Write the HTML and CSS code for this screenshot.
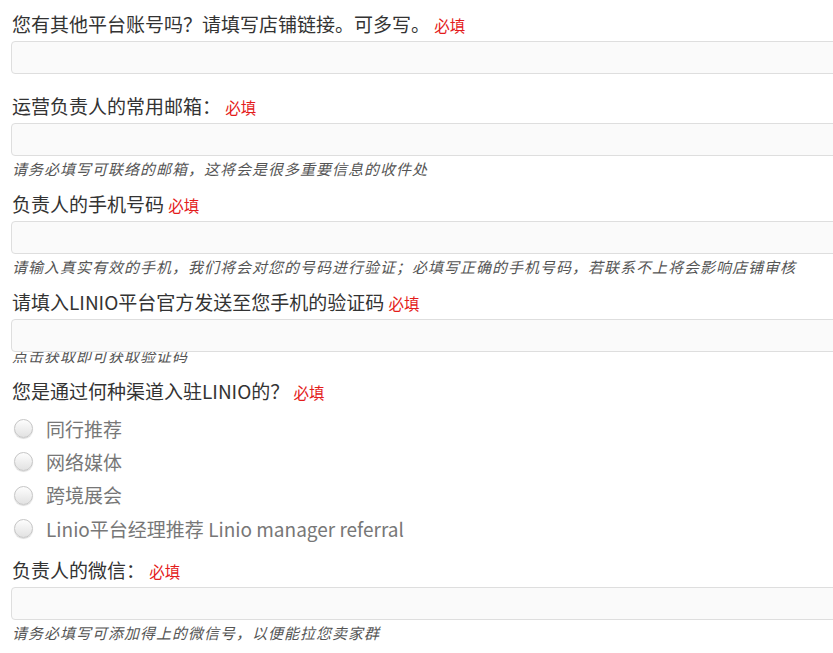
FILE: index.html
```html
<!DOCTYPE html>
<html lang="zh">
<head>
<meta charset="utf-8">
<title>入驻表单</title>
<link rel="stylesheet" href="styles.css">
</head>
<body>
<form class="form">
  <div class="group">
    <div class="label">您有其他平台账号吗？请填写店铺链接。可多写。 <span class="req">必填</span></div>
    <input class="input" type="text">
  </div>
  <div class="group has-help">
    <div class="label">运营负责人的常用邮箱： <span class="req">必填</span></div>
    <input class="input" type="text">
    <div class="help">请务必填写可联络的邮箱，这将会是很多重要信息的收件处</div>
  </div>
  <div class="group has-help">
    <div class="label">负责人的手机号码 <span class="req">必填</span></div>
    <input class="input" type="text">
    <div class="help">请输入真实有效的手机，我们将会对您的号码进行验证；必填写正确的手机号码，若联系不上将会影响店铺审核</div>
  </div>
  <div class="group has-help">
    <div class="label">请填入LINIO平台官方发送至您手机的验证码 <span class="req">必填</span></div>
    <input class="input" type="text">
    <div class="help tucked">点击获取即可获取验证码</div>
  </div>
  <div class="group radio-group">
    <div class="label">您是通过何种渠道入驻LINIO的？ <span class="req">必填</span></div>
    <div class="radios">
      <label class="radio"><span class="dot"></span><span class="radio-text">同行推荐</span></label>
      <label class="radio"><span class="dot"></span><span class="radio-text">网络媒体</span></label>
      <label class="radio"><span class="dot"></span><span class="radio-text">跨境展会</span></label>
      <label class="radio"><span class="dot"></span><span class="radio-text">Linio平台经理推荐 Linio manager referral</span></label>
    </div>
  </div>
  <div class="group has-help">
    <div class="label">负责人的微信： <span class="req">必填</span></div>
    <input class="input" type="text">
    <div class="help">请务必填写可添加得上的微信号，以便能拉您卖家群</div>
  </div>
</form>
</body>
</html>
```

FILE: styles.css
```css
html, body {
  margin: 0;
  padding: 0;
  background: #ffffff;
  overflow: hidden;
}

.form {
  display: block;
  width: 860px;
  padding: 12px 0 0 11px;
  font-family: "Noto Sans CJK SC", sans-serif;
}

.group {
  margin-bottom: 20px;
}

.group.has-help {
  margin-bottom: 13px;
}

.group.radio-group {
  margin-bottom: 13px;
}

.label {
  height: 24px;
  font-size: 19px;
  line-height: 24px;
  color: #333333;
  margin: 0 0 5px 1px;
  white-space: nowrap;
  overflow: visible;
}

.req {
  color: #e41c1c;
  font-size: 15.5px;
  line-height: 1;
}

.input {
  display: block;
  box-sizing: border-box;
  width: 100%;
  height: 33px;
  margin: 0;
  padding: 0 10px;
  border: 1px solid #dedede;
  border-radius: 4px;
  background: #fafafa;
  position: relative;
  z-index: 1;
  outline: none;
}

.help {
  height: 20px;
  font-style: italic;
  font-size: 15px;
  letter-spacing: 1px;
  line-height: 20px;
  color: #555555;
  margin: 3px 0 0 1px;
  white-space: nowrap;
}

.help.tucked {
  margin-top: -6px;
}

.radios {
  margin-top: 9px;
}

.radio {
  display: flex;
  align-items: center;
  height: 33.33px;
}

.dot {
  box-sizing: border-box;
  width: 19px;
  height: 19px;
  margin-left: 3px;
  border-radius: 50%;
  border: 1px solid #c6c6c6;
  background: linear-gradient(#fdfdfd, #e2e2e2);
  box-shadow: 0 1px 1px rgba(0, 0, 0, 0.15);
}

.radio-text {
  margin-left: 13px;
  font-size: 19px;
  line-height: 24px;
  color: #777777;
}
```
